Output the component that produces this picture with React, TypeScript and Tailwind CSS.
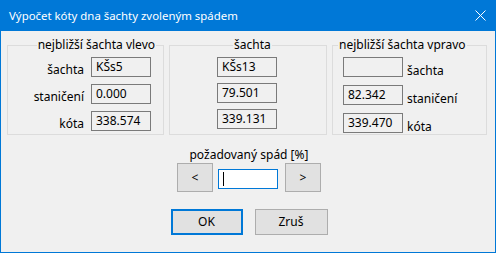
import React from 'react';

function Box({ value, className = '' }: { value: string; className?: string }) {
  return (
    <div
      className={`w-[60px] h-[20px] border border-[#7a7a7a] bg-[#f0f0f0] pl-[4px] text-[12px] leading-[18px] text-black ${className}`}
    >
      {value}
    </div>
  );
}

function Group({
  title,
  titleClass,
  className,
  children,
}: {
  title: string;
  titleClass: string;
  className: string;
  children: React.ReactNode;
}) {
  return (
    <div className={`relative h-[90px] border border-[#dcdcdc] ${className}`}>
      <span className={`absolute top-[-9px] bg-[#f0f0f0] px-[1px] text-[12px] leading-[16px] ${titleClass}`}>
        {title}
      </span>
      {children}
    </div>
  );
}

const left = [
  ['šachta', 'KŠs5'],
  ['staničení', '0.000'],
  ['kóta', '338.574'],
];
const middle = ['KŠs13', '79.501', '339.131'];
const right = [
  ['šachta', ''],
  ['staničení', '82.342'],
  ['kóta', '339.470'],
];

export default function App() {
  return (
    <div className="w-[496px] h-[253px] flex flex-col border-x border-b border-[#0078d7] bg-[#f0f0f0] font-['Noto_Sans',sans-serif] text-black overflow-hidden">
      {/* title bar */}
      <div className="h-[31px] shrink-0 flex items-center justify-between bg-[#0078d7] pl-[8px] pr-[9px] text-white">
        <span className="text-[11.4px] leading-[16px]">Výpočet kóty dna šachty zvoleným spádem</span>
        <svg width="11" height="11" viewBox="0 0 11 11" className="mb-[1px]">
          <path d="M0.5 0.5 L10.5 10.5 M10.5 0.5 L0.5 10.5" stroke="white" strokeWidth="1" />
        </svg>
      </div>

      {/* groups */}
      <div className="mt-[14px] flex gap-[5px] pl-[6px]">
        <Group title="nejbližší šachta vlevo" titleClass="right-[7px]" className="w-[157px]">
          <div className="flex flex-col gap-[6px] pt-[11px]">
            {left.map(([label, val]) => (
              <div key={label} className="flex items-start gap-[7px]">
                <span className="w-[76px] text-right text-[12px] leading-[16px] mt-[5px]">{label}</span>
                <Box value={val} />
              </div>
            ))}
          </div>
        </Group>
        <Group title="šachta" titleClass="left-[63px]" className="w-[158px]">
          <div className="flex flex-col items-center gap-[6px] pt-[11px] pr-[2px]">
            {middle.map((v) => (
              <Box key={v} value={v} />
            ))}
          </div>
        </Group>
        <Group title="nejbližší šachta vpravo" titleClass="left-[5px]" className="w-[155px]">
          <div className="flex flex-col gap-[6px] pt-[11px] pl-[10px]">
            {right.map(([label, val]) => (
              <div key={label} className="flex items-start gap-[4px]">
                <Box value={val} />
                <span className="text-[12px] leading-[16px] mt-[6px]">{label}</span>
              </div>
            ))}
          </div>
        </Group>
      </div>

      {/* slope input */}
      <div className="mt-[12px] flex flex-col items-center pl-[2px]">
        <span className="text-[12px] leading-[16px]">požadovaný spád [%]</span>
        <div className="flex items-start">
          <button className="w-[36px] h-[29px] border border-[#adadad] bg-[#e1e1e1] text-[12px] leading-[16px]">&lt;</button>
          <div className="ml-[5px] mt-[6px] w-[60px] h-[20px] border border-[#0078d7] bg-white pl-[4px] pt-[2px]">
            <div className="w-[1px] h-[14px] bg-black" />
          </div>
          <button className="ml-[7px] w-[36px] h-[29px] border border-[#adadad] bg-[#e1e1e1] text-[12px] leading-[16px]">&gt;</button>
        </div>
      </div>

      {/* dialog buttons */}
      <div className="mt-[17px] flex justify-center gap-[12px] pl-[2px]">
        <button className="w-[72px] h-[26px] border-2 border-[#0078d7] bg-[#e1e1e1] text-[12px] leading-[16px]">OK</button>
        <button className="w-[73px] h-[26px] border border-[#adadad] bg-[#e1e1e1] text-[12px] leading-[16px]">Zruš</button>
      </div>
    </div>
  );
}
